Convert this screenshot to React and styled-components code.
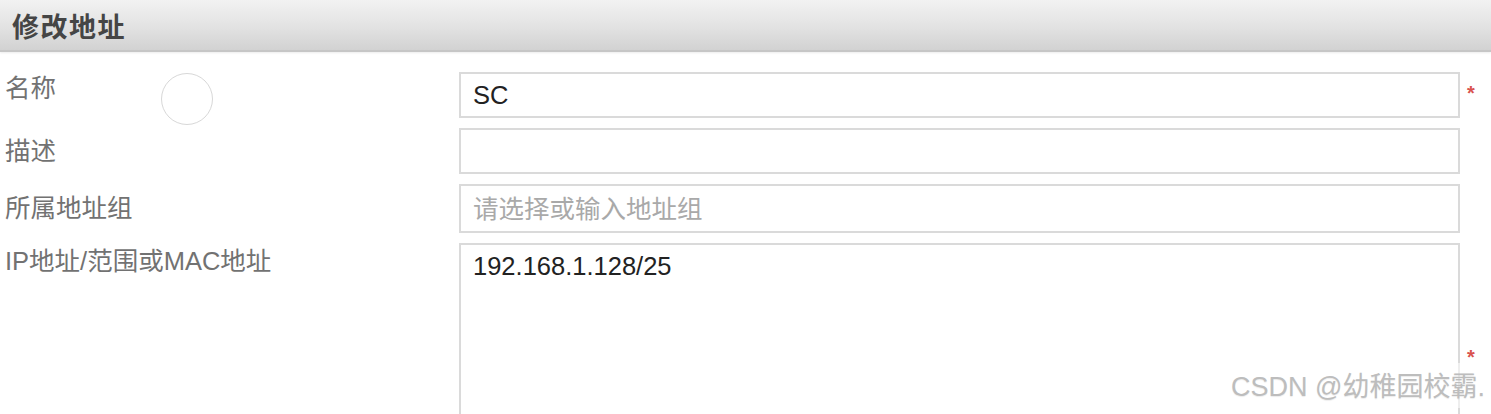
import React from 'react';
import styled, { createGlobalStyle } from 'styled-components';

const GlobalStyle = createGlobalStyle`
  html, body {
    margin: 0;
    padding: 0;
    background: #fff;
    overflow: hidden;
  }
  body {
    font-family: "Liberation Sans", "Noto Sans CJK SC", sans-serif;
  }
`;

const Page = styled.div`
  position: relative;
  width: 1491px;
  height: 414px;
  overflow: hidden;
  background: #fff;
`;

const Header = styled.div`
  height: 50px;
  display: flex;
  align-items: center;
  padding-left: 12px;
  background: linear-gradient(to bottom, #f2f2f2 0%, #e2e2e2 55%, #d2d2d2 100%);
  border-bottom: 2px solid #c6c6c6;
  box-shadow: 0 1px 2px rgba(0, 0, 0, 0.08);
`;

const Title = styled.h2`
  margin: 0;
  font-size: 27px;
  font-weight: bold;
  color: #454545;
  letter-spacing: 1.5px;
  font-family: "Noto Sans CJK SC", sans-serif;
`;

const Form = styled.div`
  display: grid;
  grid-template-columns: 459px 1001px 1fr;
  row-gap: 10px;
  padding-top: 20px;
`;

const Label = styled.div`
  padding-left: 5px;
  padding-top: ${p => p.$top}px;
  font-size: 25.5px;
  line-height: 28px;
  color: #727272;
  font-family: "Liberation Sans", "Noto Sans CJK SC", sans-serif;
  white-space: nowrap;
`;

const Field = styled.div`
  box-sizing: border-box;
  height: ${p => p.$h}px;
  border: 2px solid #dadada;
  background: #fff;
  display: flex;
  align-items: ${p => (p.$multi ? 'flex-start' : 'center')};
  padding: ${p => (p.$multi ? '6px 12px' : '0 12px')};
  font-size: 25.5px;
  line-height: 30px;
  color: ${p => (p.$placeholder ? '#a9a9a9' : '#222')};
  font-family: "Liberation Sans", "Noto Sans CJK SC", sans-serif;
`;

const Mark = styled.div`
  padding-top: ${p => p.$top}px;
  padding-left: 7px;
  color: #d9534f;
  font-size: 20px;
  line-height: 20px;
  font-weight: bold;
`;

const Circle = styled.div`
  position: absolute;
  left: 161px;
  top: 73px;
  width: 50px;
  height: 50px;
  border-radius: 50%;
  border: 1px solid #d8d8d8;
  background: #fff;
`;

const Watermark = styled.div`
  position: absolute;
  right: 6px;
  bottom: 6px;
  padding: 2px 0 4px 38px;
  background: rgba(255, 255, 255, 0.55);
  font-size: 27px;
  color: #bdbdbd;
  text-shadow: 0 1px 1px rgba(0, 0, 0, 0.08);
  font-family: "Liberation Sans", "Noto Sans CJK SC", sans-serif;
  white-space: nowrap;
`;

const rows = [
  { label: '名称', top: 2, h: 46, value: 'SC', mark: 11 },
  { label: '描述', top: 9, h: 46, value: '' },
  { label: '所属地址组', top: 10, h: 49, value: '请选择或输入地址组', placeholder: true },
  { label: 'IP地址/范围或MAC地址', top: 4, h: 230, value: '192.168.1.128/25', multi: true, mark: 104 },
];

export default function App() {
  return (
    <Page>
      <GlobalStyle />
      <Header>
        <Title>修改地址</Title>
      </Header>
      <Form>
        {rows.map(r => (
          <React.Fragment key={r.label}>
            <Label $top={r.top}>{r.label}</Label>
            <Field $h={r.h} $multi={r.multi} $placeholder={r.placeholder}>
              {r.value}
            </Field>
            <Mark $top={r.mark || 0}>{r.mark ? '*' : ''}</Mark>
          </React.Fragment>
        ))}
      </Form>
      <Circle />
      <Watermark>CSDN @幼稚园校霸.</Watermark>
    </Page>
  );
}
